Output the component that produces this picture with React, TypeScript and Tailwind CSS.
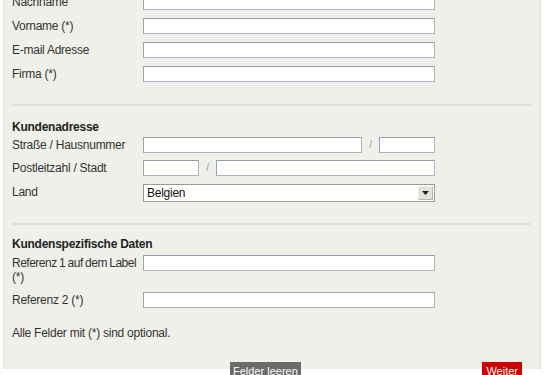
import React from "react";

const inputCls =
  "h-[16px] border border-[#a9b5c2] border-t-[#8f9dac] border-l-[#98a5b4] bg-white";

function Row({
  label,
  children,
  className = "",
}: {
  label: React.ReactNode;
  children: React.ReactNode;
  className?: string;
}) {
  return (
    <div className={`flex items-start ${className}`}>
      <div className="w-[131px] shrink-0 whitespace-nowrap pt-[1px] leading-[14px]">{label}</div>
      {children}
    </div>
  );
}

function Field({ w = "w-[292px]" }: { w?: string }) {
  return <div className={`${inputCls} ${w}`} />;
}

function Slash() {
  return <span className="w-[17px] text-center text-[10px] leading-[16px] text-[#999]">/</span>;
}

function Separator() {
  return <div className="mr-[8px] h-[2px] bg-[#deded8]" />;
}

export default function App() {
  return (
    <div className="h-[375px] w-[550px] overflow-hidden bg-white font-['Liberation_Sans',Arial,sans-serif] text-[12px] tracking-[-0.25px] text-[#333]">
      <div className="ml-[3px] h-full w-[538px] border-l border-r-2 border-[#e3e3de] bg-[#f0f0eb] pl-[8px]">
        <div className="-mt-[6px] flex flex-col gap-[8px]">
          <Row label="Nachname">
            <Field />
          </Row>
          <Row label="Vorname (*)">
            <Field />
          </Row>
          <Row label="E-mail Adresse">
            <Field />
          </Row>
          <Row label="Firma (*)">
            <Field />
          </Row>
        </div>

        <div className="mt-[22px]">
          <Separator />
        </div>

        <div className="mt-[14px] font-bold leading-[14px] text-[#222]">Kundenadresse</div>
        <div className="mt-[3px] flex flex-col gap-[7px]">
          <Row label="Straße / Hausnummer">
            <Field w="w-[219px]" />
            <Slash />
            <Field w="w-[56px]" />
          </Row>
          <Row label="Postleitzahl / Stadt">
            <Field w="w-[56px]" />
            <Slash />
            <Field w="w-[219px]" />
          </Row>
          <Row label="Land" className="mt-[1px]">
            <div className="flex h-[18px] w-[292px] items-center border border-[#999] bg-white pl-[3px] text-[#111]">
              <span className="flex-1 leading-[16px]">Belgien</span>
              <div className="mr-[1px] flex h-[14px] w-[15px] items-center justify-center border border-[#b5b5b0] border-t-[#eee] border-l-[#eee] bg-[#e4e2dc]">
                <svg width="7" height="4" viewBox="0 0 7 4">
                  <path d="M0 0h7L3.5 4z" fill="#222" />
                </svg>
              </div>
            </div>
          </Row>
        </div>

        <div className="mt-[21px]">
          <Separator />
        </div>

        <div className="mt-[12px] font-bold leading-[14px] text-[#222]">Kundenspezifische Daten</div>
        <div className="mt-[4px] flex flex-col gap-[8px]">
          <Row
            label={
              <>
                <span className="tracking-[-0.5px] [word-spacing:-0.5px]">Referenz 1 auf dem Label</span>
                <br />
                (*)
              </>
            }
          >
            <Field />
          </Row>
          <Row label="Referenz 2 (*)">
            <Field />
          </Row>
        </div>

        <div className="mt-[18px] leading-[14px]">Alle Felder mit (*) sind optional.</div>

        <div className="mt-[22px] flex items-start tracking-normal">
          <button className="ml-[218px] h-[18px] bg-[#6b6b6b] px-[3px] text-[11px] leading-[18px] text-white">
            Felder leeren
          </button>
          <button className="ml-auto mr-[17px] h-[18px] bg-[#cc0000] px-[4px] text-[11px] leading-[18px] text-white">
            Weiter
          </button>
        </div>
      </div>
    </div>
  );
}
